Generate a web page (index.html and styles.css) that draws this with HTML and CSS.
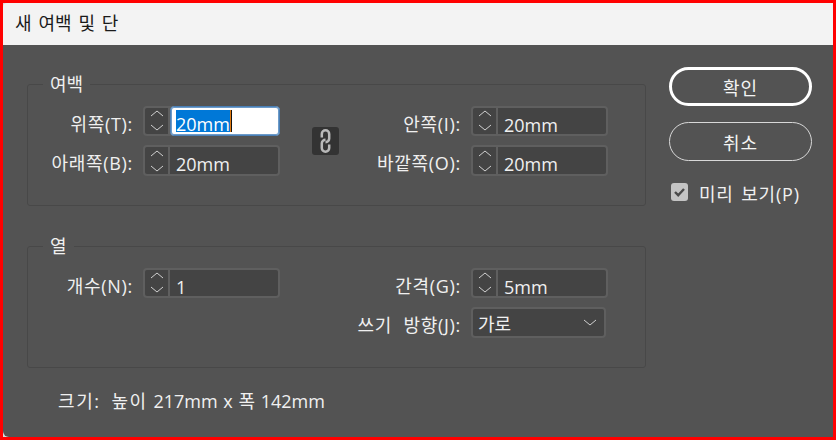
FILE: index.html
```html
<!DOCTYPE html>
<html lang="ko">
<head>
<meta charset="utf-8">
<title>새 여백 및 단</title>
<link rel="stylesheet" href="styles.css">
</head>
<body>
<div class="dialog">
  <div class="title">새 여백 및 단</div>
  <div class="body">
    <div class="main">
      <fieldset class="group">
        <legend>여백</legend>
        <div class="grid">
          <label class="lbl">위쪽(T):</label>
          <div class="spin">
            <span class="step"><svg width="26" height="26" viewBox="0 0 26 26"><path d="M7 8l6-5 6 5M7 17l6 5 6-5"/></svg></span>
            <span class="val active"><span class="sel">20mm</span><i class="caret"></i></span>
          </div>
          <div class="link">
            <svg width="27" height="28" viewBox="0 0 27 28"><path d="M9.8 10.5V7a3.7 3.7 0 0 1 7.4 0v4.5a3.7 3.7 0 0 1-3.7 3.7M17.2 17.5V21a3.7 3.7 0 0 1-7.4 0v-4.5a3.7 3.7 0 0 1 3.7-3.7"/></svg>
          </div>
          <label class="lbl right">안쪽(I):</label>
          <div class="spin right-field">
            <span class="step"><svg width="26" height="26" viewBox="0 0 26 26"><path d="M7 8l6-5 6 5M7 17l6 5 6-5"/></svg></span>
            <span class="val">20mm</span>
          </div>
          <label class="lbl">아래쪽(B):</label>
          <div class="spin">
            <span class="step"><svg width="26" height="26" viewBox="0 0 26 26"><path d="M7 8l6-5 6 5M7 18l6 5 6-5"/></svg></span>
            <span class="val">20mm</span>
          </div>
          <label class="lbl right">바깥쪽(O):</label>
          <div class="spin right-field">
            <span class="step"><svg width="26" height="26" viewBox="0 0 26 26"><path d="M7 8l6-5 6 5M7 18l6 5 6-5"/></svg></span>
            <span class="val">20mm</span>
          </div>
        </div>
      </fieldset>
      <fieldset class="group second">
        <legend>열</legend>
        <div class="grid">
          <label class="lbl">개수(N):</label>
          <div class="spin">
            <span class="step"><svg width="26" height="26" viewBox="0 0 26 26"><path d="M7 8l6-5 6 5M7 17l6 5 6-5"/></svg></span>
            <span class="val">1</span>
          </div>
          <label class="lbl right">간격(G):</label>
          <div class="spin right-field">
            <span class="step"><svg width="26" height="26" viewBox="0 0 26 26"><path d="M7 8l6-5 6 5M7 17l6 5 6-5"/></svg></span>
            <span class="val">5mm</span>
          </div>
          <label class="lbl right">쓰기 방향(J):</label>
          <div class="select right-field">
            <span>가로</span>
            <svg width="14" height="8" viewBox="0 0 14 8"><path d="M1 1l6 5 6-5"/></svg>
          </div>
        </div>
      </fieldset>
      <p class="size"><span class="ko">크기: 높이</span> 217mm x 폭 142mm</p>
    </div>
    <div class="side">
      <button class="btn primary">확인</button>
      <button class="btn">취소</button>
      <div class="check">
        <span class="box"><svg width="17" height="18" viewBox="0 0 17 18"><path d="M4 9l3.2 3.2L13 6"/></svg></span>
        <span class="check-text">미리 보기(P)</span>
      </div>
    </div>
  </div>
</div>
</body>
</html>
```
FILE: styles.css
```css
* { box-sizing: border-box; }
html, body { margin: 0; padding: 0; }
body {
  width: 836px;
  height: 440px;
  overflow: hidden;
  font-family: "Open Sans", "Noto Sans CJK KR", sans-serif;
  font-size: 18px;
  color: #f0f0f0;
}
.dialog {
  width: 836px;
  height: 440px;
  border: 3px solid #ff0000;
  background: #d8d8d8;
  display: flex;
  flex-direction: column;
}
.title {
  height: 42px;
  flex: none;
  background: #f3f3f3;
  color: #1a1a1a;
  font-size: 18px;
  word-spacing: 2.2px;
  line-height: 40px;
  padding-left: 12px;
  border-top-left-radius: 4px;
}
.body {
  flex: 1;
  display: flex;
  background: #535353;
  padding-left: 24px;
  border-bottom-left-radius: 6px;
}
.main { width: 619px; flex: none; }
.group {
  margin: 30px 0 0;
  padding: 0;
  height: 131px;
  border: 1px solid #484848;
  border-radius: 3px;
  min-width: 0;
}
.group legend {
  margin-left: 15px;
  padding: 0 7px 0 7px;
  font-size: 18px;
  line-height: 18px;
  color: #f0f0f0;
}
.second { margin-top: 31px; }
.grid {
  display: grid;
  grid-template-columns: 115px 137px 32px 27px 132px 137px;
  grid-template-rows: 30px 31px;
  row-gap: 9px;
  margin-top: 13px;
}
.lbl {
  text-align: right;
  padding: 3px 10px 0 0;
  line-height: 30px;
  letter-spacing: 0.7px;
  word-spacing: 6px;
  white-space: nowrap;
  grid-column: 1;
}
.lbl.right { grid-column: 5; }
.right-field { grid-column: 6; }
.spin {
  display: flex;
  border: 2px solid #5f5f5f;
  border-radius: 4px;
  background: #444444;
}
.step {
  width: 25px;
  flex: none;
  border-right: 2px solid #5f5f5f;
  display: flex;
  align-items: center;
  justify-content: center;
}
.step svg { flex: none; }
.step path, .select path {
  fill: none;
  stroke: #d0d0d0;
  stroke-width: 1;
}
.val {
  flex: 1;
  padding: 4px 0 0 6px;
  line-height: 26px;
}
.active {
  background: #ffffff;
  margin: -2px -2px -2px 0;
  border: 1px solid #4a7fb5;
  box-shadow: inset 0 0 0 1px #6d9bc9;
  border-radius: 4px;
  padding: 3px 0 0 5px;
  display: flex;
  align-items: flex-start;
}
.sel {
  background: #0078d7;
  color: #ffffff;
  line-height: 28px;
  height: 22px;
}
.caret {
  width: 2px;
  height: 22px;
  background: linear-gradient(90deg, #e07a10 50%, #111 50%);
}
.link {
  grid-row: 1 / span 2;
  grid-column: 4;
  align-self: center;
  height: 28px;
  background: #333333;
  border-radius: 3px;
}
.link svg { display: block; }
.link path {
  fill: none;
  stroke: #b8b8b8;
  stroke-width: 2.5;
}
.select {
  width: 135px;
  border: 2px solid #5f5f5f;
  border-radius: 4px;
  background: #444444;
  display: flex;
  align-items: center;
  justify-content: space-between;
  padding: 0 7px 0 5px;
}
.select svg { flex: none; }
.size {
  margin: 21px 0 0 31px;
  line-height: 24px;
  word-spacing: 1px;
}
.ko {
  letter-spacing: 1.6px;
  word-spacing: 4.5px;
}
.side {
  margin-left: 23px;
  width: 143px;
  padding-top: 22px;
  display: flex;
  flex-direction: column;
  align-items: flex-start;
}
.btn {
  width: 143px;
  height: 39px;
  border: 1px solid #d8d8d8;
  border-radius: 20px;
  background: transparent;
  color: #f4f4f4;
  font: inherit;
  letter-spacing: 1px;
  margin-bottom: 16px;
  padding: 0;
}
.primary { border: 3px solid #ffffff; }
.check {
  display: flex;
  align-items: flex-start;
  gap: 11px;
  margin: 5px 0 0 2px;
  line-height: 20px;
  white-space: nowrap;
}
.check-text {
  letter-spacing: 0.8px;
  word-spacing: 2px;
  padding-top: 2px;
}
.box {
  width: 17px;
  height: 18px;
  margin-top: 1px;
  background: #c4c4c4;
  border-radius: 3px;
  display: block;
}
.box svg { display: block; }
.box path {
  fill: none;
  stroke: #4a4a4a;
  stroke-width: 2.4;
}
```
